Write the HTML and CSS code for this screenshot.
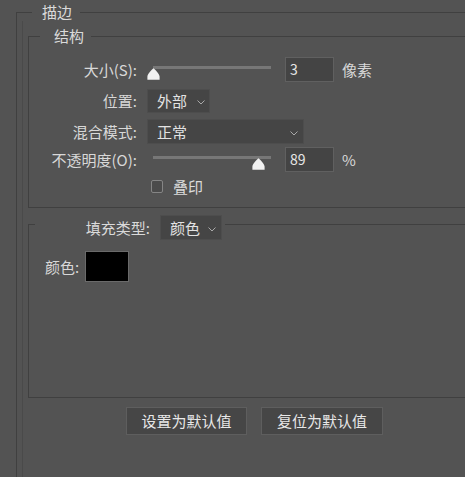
FILE: index.html
```html
<!DOCTYPE html>
<html lang="zh">
<head>
<meta charset="utf-8">
<title>描边</title>
<link rel="stylesheet" href="styles.css">
</head>
<body>
<div class="panel">
  <fieldset class="group outer">
    <legend class="outer-legend">描边</legend>

    <fieldset class="group inner">
      <legend class="inner-legend">结构</legend>
      <div class="rows">
        <div class="row row-size">
          <span class="label">大小(S):</span>
          <div class="slider">
            <div class="track"></div>
            <svg class="thumb" style="left:0px" width="13" height="12" viewBox="0 0 13 12"><path d="M6.5 0.3 C7.6 1.4 12.6 5.8 12.6 8.6 V11.7 H0.4 V8.6 C0.4 5.8 5.4 1.4 6.5 0.3Z" fill="#f2f2f2"/></svg>
          </div>
          <div class="num">3</div>
          <span class="unit">像素</span>
        </div>
        <div class="row row-pos">
          <span class="label">位置:</span>
          <div class="select sel-pos"><span>外部</span><svg class="chev" width="8" height="5" viewBox="0 0 8 5"><polyline points="0.5,0.5 4,4 7.5,0.5" fill="none" stroke="#a9a9a9" stroke-width="1"/></svg></div>
        </div>
        <div class="row row-mode">
          <span class="label">混合模式:</span>
          <div class="select sel-mode"><span>正常</span><svg class="chev" width="8" height="5" viewBox="0 0 8 5"><polyline points="0.5,0.5 4,4 7.5,0.5" fill="none" stroke="#a9a9a9" stroke-width="1"/></svg></div>
        </div>
        <div class="row row-opacity">
          <span class="label">不透明度(O):</span>
          <div class="slider">
            <div class="track"></div>
            <svg class="thumb" style="left:105px" width="13" height="12" viewBox="0 0 13 12"><path d="M6.5 0.3 C7.6 1.4 12.6 5.8 12.6 8.6 V11.7 H0.4 V8.6 C0.4 5.8 5.4 1.4 6.5 0.3Z" fill="#f2f2f2"/></svg>
          </div>
          <div class="num">89</div>
          <span class="unit">%</span>
        </div>
        <div class="row row-check">
          <span class="checkbox"></span>
          <span class="check-label">叠印</span>
        </div>
      </div>
    </fieldset>

    <fieldset class="group fill">
      <legend class="fill-legend">
        <span class="fill-label">填充类型:</span>
        <span class="select sel-fill"><span>颜色</span><svg class="chev" width="8" height="5" viewBox="0 0 8 5"><polyline points="0.5,0.5 4,4 7.5,0.5" fill="none" stroke="#a9a9a9" stroke-width="1"/></svg></span>
      </legend>
      <div class="fill-body">
        <span class="color-label">颜色:</span>
        <div class="swatch"></div>
      </div>
    </fieldset>

    <div class="buttons">
      <button class="btn btn-default">设置为默认值</button>
      <button class="btn btn-reset">复位为默认值</button>
    </div>
  </fieldset>
</div>
</body>
</html>
```

FILE: styles.css
```css
html, body {
  margin: 0;
  padding: 0;
  background: #535353;
  overflow: hidden;
  height: 100%;
}

body {
  font-family: "Noto Sans CJK SC", "Noto Sans", sans-serif;
  font-size: 15px;
  color: #dadada;
  line-height: 16px;
}

.panel {
  padding: 4px 0 0 16px;
}

.group {
  margin: 0;
  border: 1px solid #404040;
  min-inline-size: 0;
}

.outer {
  position: relative;
  width: 449px;
  height: 473px;
  padding: 8px 0 0 11px;
  box-sizing: border-box;
  border-right: none;
  border-bottom: none;
}

.outer::before {
  content: "";
  position: absolute;
  left: 5px;
  top: 1px;
  bottom: 0;
  width: 1px;
  background: #4a4a4a;
}

.outer-legend {
  margin-left: 4px;
  padding: 0 8px 0 10px;
  line-height: 16px;
  height: 16px;
}

.inner {
  padding: 0;
  border-right: none;
}

.inner-legend {
  margin-left: 11px;
  padding: 0 7px 0 14px;
  line-height: 16px;
  height: 16px;
}

.rows {
  padding: 13px 0 14px 0;
}

.row {
  display: flex;
  align-items: center;
}

.label {
  width: 108px;
  text-align: right;
  margin-right: 10px;
  flex: none;
  color: #d8d8d8;
}

.row-size { height: 25px; }
.row-pos { height: 24px; margin-top: 7px; }
.row-mode { height: 25px; margin-top: 6px; }
.row-opacity { height: 25px; margin-top: 3px; }
.row-check { height: 13px; margin-top: 8px; padding-left: 122px; }

.slider {
  position: relative;
  width: 126px;
  height: 25px;
  margin-right: 12px;
  flex: none;
}

.track {
  margin: 9px 0 0 6px;
  width: 118px;
  height: 3px;
  background: #777777;
}

.thumb {
  position: absolute;
  top: 11px;
  display: block;
}

.num {
  box-sizing: border-box;
  width: 49px;
  height: 25px;
  background: #444444;
  border: 1px solid #606060;
  color: #e6e6e6;
  font-size: 14px;
  line-height: 23px;
  padding-left: 4px;
  flex: none;
}

.unit {
  margin-left: 8px;
  color: #d8d8d8;
}

.select {
  box-sizing: border-box;
  display: flex;
  align-items: center;
  justify-content: space-between;
  height: 100%;
  background: #454545;
  border: 1px solid #4d4d4d;
  padding: 0 4px 0 9px;
  color: #e2e2e2;
}

.chev {
  display: block;
  flex: none;
  margin-top: 3px;
}

.sel-pos { width: 63px; }
.sel-mode { width: 157px; padding-right: 5px; }

.checkbox {
  box-sizing: border-box;
  width: 12px;
  height: 13px;
  border: 1px solid #858585;
  border-radius: 2px;
  background: #4b4b4b;
  margin-right: 10px;
  flex: none;
}

.check-label {
  color: #dcdcdc;
}

.fill {
  margin-top: 1px;
  padding: 0 0 115px 0;
  border-right: none;
}

.fill-legend {
  margin-left: 6px;
  padding: 6px 3px 0 0;
  display: flex;
  align-items: center;
  height: 31px;
  box-sizing: border-box;
}

.fill-label {
  width: 115px;
  text-align: right;
  margin-right: 10px;
  white-space: nowrap;
}

.sel-fill {
  width: 62px;
  height: 25px;
  padding-right: 5px;
}

.fill-body {
  display: flex;
  align-items: center;
  margin: 11px 0 0 16px;
}

.color-label {
  white-space: nowrap;
  margin-right: 6px;
  color: #d8d8d8;
}

.swatch {
  box-sizing: border-box;
  width: 44px;
  height: 31px;
  background: #000000;
  border: 1px solid #6a6a6a;
  flex: none;
}

.buttons {
  display: flex;
  gap: 14px;
  margin: 9px 0 0 98px;
}

.btn {
  box-sizing: border-box;
  height: 28px;
  width: 121px;
  background: #464646;
  border: 1px solid #5e5e5e;
  color: #e8e8e8;
  font-family: "Noto Sans CJK SC", "Noto Sans", sans-serif;
  font-size: 15px;
  line-height: 16px;
  padding: 0;
}

.btn-reset {
  width: 122px;
}
```
